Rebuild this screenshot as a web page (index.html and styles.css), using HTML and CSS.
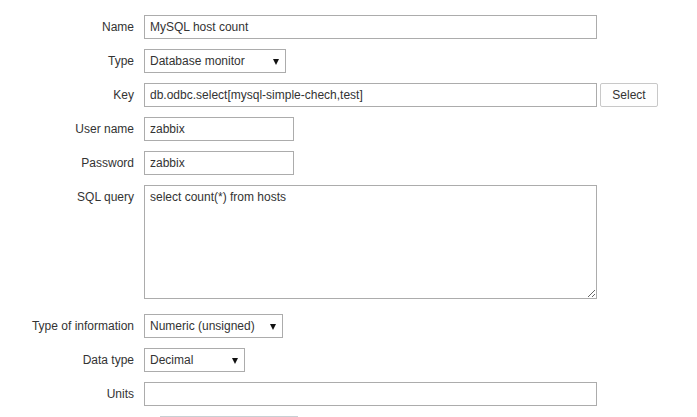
FILE: index.html
```html
<!DOCTYPE html>
<html>
<head>
<meta charset="utf-8">
<link rel="stylesheet" href="styles.css">
</head>
<body>
<form class="form">
  <label class="lbl">Name</label>
  <div class="field"><input class="inp wide" type="text" value="MySQL host count"></div>

  <label class="lbl">Type</label>
  <div class="field"><div class="sel w-type"><span>Database monitor</span><span class="arrow"></span></div></div>

  <label class="lbl">Key</label>
  <div class="field row"><input class="inp wide" type="text" value="db.odbc.select[mysql-simple-chech,test]"><button class="btn" type="button">Select</button></div>

  <label class="lbl">User name</label>
  <div class="field"><input class="inp short" type="text" value="zabbix"></div>

  <label class="lbl">Password</label>
  <div class="field"><input class="inp short" type="text" value="zabbix"></div>

  <label class="lbl">SQL query</label>
  <div class="field"><textarea class="ta">select count(*) from hosts</textarea></div>

  <label class="lbl">Type of information</label>
  <div class="field"><div class="sel w-info"><span>Numeric (unsigned)</span><span class="arrow"></span></div></div>

  <label class="lbl">Data type</label>
  <div class="field"><div class="sel w-data"><span>Decimal</span><span class="arrow"></span></div></div>

  <label class="lbl">Units</label>
  <div class="field"><input class="inp wide" type="text" value=""></div>

  <label class="lbl"></label>
  <div class="field"><div class="cut"></div></div>
</form>
</body>
</html>
```

FILE: styles.css
```css
html, body {
  margin: 0;
  padding: 0;
  background: #ffffff;
  font-family: "Liberation Sans", Arial, sans-serif;
  font-size: 12px;
  color: #333333;
  overflow: hidden;
}

.form {
  display: grid;
  grid-template-columns: 134px auto;
  column-gap: 10px;
  row-gap: 10px;
  padding-top: 15px;
}

.lbl {
  text-align: right;
  line-height: 24px;
  color: #333333;
  white-space: nowrap;
}

.field {
  display: flex;
  align-items: flex-start;
}

.row {
  gap: 3px;
}

.inp {
  box-sizing: border-box;
  height: 24px;
  border: 1px solid #acacac;
  background: #fff;
  padding: 0 5px;
  margin: 0;
  font-family: "Liberation Sans", Arial, sans-serif;
  font-size: 12px;
  color: #333333;
  outline: none;
}

.wide { width: 453px; }
.short { width: 150px; }

.sel {
  position: relative;
  box-sizing: border-box;
  height: 24px;
  border: 1px solid #acacac;
  background: #fff;
  padding: 0 5px;
  line-height: 22px;
  color: #333333;
}

.w-type { width: 142px; }
.w-info { width: 139px; }
.w-data { width: 101px; }

.arrow {
  position: absolute;
  right: 6px;
  top: 9px;
  width: 0;
  height: 0;
  border-left: 3.5px solid transparent;
  border-right: 3.5px solid transparent;
  border-top: 6px solid #111;
}

.btn {
  box-sizing: border-box;
  width: 58px;
  height: 24px;
  border: 1px solid #c8c8c8;
  border-radius: 2px;
  background: #fefefe;
  font-family: "Liberation Sans", Arial, sans-serif;
  font-size: 12px;
  color: #333333;
  padding: 0;
  margin: 0;
}

.ta {
  box-sizing: border-box;
  width: 453px;
  height: 114px;
  margin: 0 0 5px 0;
  border: 1px solid #acacac;
  padding: 4px 5px;
  font-family: "Liberation Sans", Arial, sans-serif;
  font-size: 12px;
  line-height: 14px;
  color: #333333;
  resize: both;
  outline: none;
}

.cut {
  margin-left: 16px;
  width: 138px;
  height: 24px;
  border: 1px solid #c8d0d4;
  box-sizing: border-box;
}
```
